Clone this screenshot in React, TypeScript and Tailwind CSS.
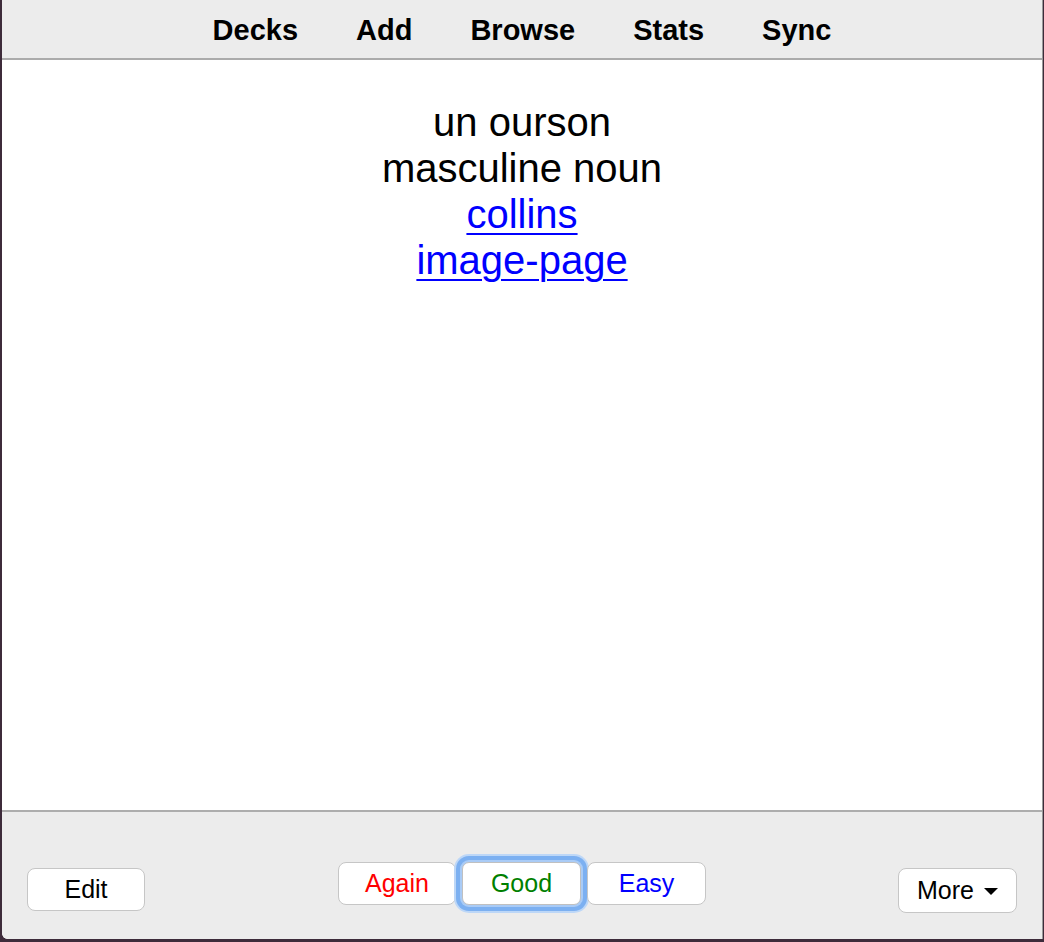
import React from "react";

const navItems = ["Decks", "Add", "Browse", "Stats", "Sync"];

const font = { fontFamily: '"Liberation Sans", Arial, sans-serif' };

const App: React.FC = () => {
  return (
    <div className="w-[1044px] h-[942px] bg-[#3d2b3a] overflow-hidden" style={font}>
      <div className="ml-[2px] w-[1041px] h-[939px] flex flex-col bg-white border-r border-[#9a9a9a] rounded-bl-[6px] overflow-hidden">
        {/* top toolbar */}
        <div className="h-[60px] shrink-0 bg-[#ececec] border-b-2 border-[#ababab] flex items-center justify-center gap-[58px] pt-[3px] text-[29px] font-bold text-black">
          {navItems.map((item) => (
            <span key={item}>{item}</span>
          ))}
        </div>

        {/* card */}
        <div className="flex-1 pt-[39px] text-center text-[40px] leading-[46px] text-black">
          <div>un ourson</div>
          <div>masculine noun</div>
          <div>
            <a href="#" className="text-[#0000ff] underline decoration-2 underline-offset-[5px]">
              collins
            </a>
          </div>
          <div>
            <a href="#" className="text-[#0000ff] underline decoration-2 underline-offset-[5px]">
              image-page
            </a>
          </div>
        </div>

        {/* bottom bar */}
        <div className="h-[129px] shrink-0 bg-[#ececec] border-t-2 border-[#adadad] grid grid-cols-[1fr_auto_1fr] px-[25px]">
          <div className="flex items-start pt-[56px]">
            <button className="shrink-0 w-[118px] h-[43px] bg-white border border-[#c6c6c6] rounded-[8px] text-[25px] text-black">
              Edit
            </button>
          </div>
          <div className="flex items-start justify-center gap-[6px] pt-[50px]">
            <button className="shrink-0 w-[118px] h-[43px] bg-white border border-[#c6c6c6] rounded-[8px] text-[25px] text-[#ff0000]">
              Again
            </button>
            <button className="shrink-0 w-[119px] h-[43px] bg-white border border-[#c0c0c0] rounded-[7px] text-[25px] text-[#008000] shadow-[0_0_0_2px_#a9cbf6,0_0_0_6px_#7cb0f1,0_0_0_8px_#bdd7f7]">
              Good
            </button>
            <button className="shrink-0 w-[119px] h-[43px] bg-white border border-[#c6c6c6] rounded-[8px] text-[25px] text-[#0000ff]">
              Easy
            </button>
          </div>
          <div className="flex items-start justify-end pt-[56px]">
            <button className="shrink-0 w-[119px] h-[45px] bg-white border border-[#c6c6c6] rounded-[8px] text-[25px] text-black flex items-center justify-center gap-[10px]">
              <span>More</span>
              <svg width="14" height="8" viewBox="0 0 14 8" className="mt-[2px]">
                <path d="M0 0 L14 0 L7 7 Z" fill="#000" />
              </svg>
            </button>
          </div>
        </div>
      </div>
    </div>
  );
};

export default App;
